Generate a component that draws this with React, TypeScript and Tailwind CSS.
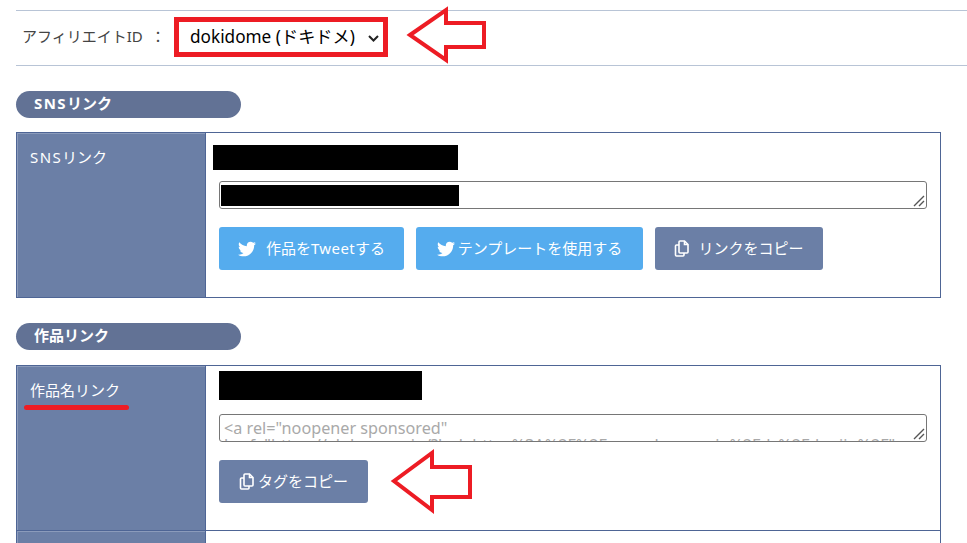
import type { ReactNode } from 'react';
import { FaTwitter } from 'react-icons/fa';

const Arrow = ({ points }: { points: string }) => (
  <svg className="absolute top-0 left-0" width="967" height="543" fill="none">
    <polygon points={points} stroke="#ed1c24" strokeWidth="4" />
  </svg>
);

const CopyIcon = ({ className }: { className: string }) => (
  <svg className={className} width="15" height="17" viewBox="0 0 15 17" fill="none" stroke="white" strokeWidth="1.6">
    <path d="M5 5H2.5a1 1 0 0 0-1 1V15a1 1 0 0 0 1 1H9a1 1 0 0 0 1-1V13" />
    <path d="M6 1H10.5L14 4.5V12a1 1 0 0 1-1 1H6a1 1 0 0 1-1-1V2a1 1 0 0 1 1-1Z" />
    <path d="M10.5 1V4.5H14" />
  </svg>
);

const SectionTitle = ({ children }: { children: ReactNode }) => (
  <div className="w-[225px] h-[27px] rounded-full bg-[#627295] pl-[18px] text-white text-[15px] font-bold leading-[25px]">
    {children}
  </div>
);

const RowLabel = ({ children }: { children: ReactNode }) => (
  <div className="w-[189px] shrink-0 bg-[#6b7fa6] border-r border-[#4e6595] shadow-[inset_1px_1px_0_#8b9bbb] pl-[13px] pt-[14px] text-white text-[15px] leading-5">
    {children}
  </div>
);

const ActionButton = ({ children, className }: { children: ReactNode; className: string }) => (
  <button className={`${className} h-[43px] rounded-[3px] flex items-center justify-center text-white text-[15px]`}>
    {children}
  </button>
);

const ResizeHandle = () => (
  <svg className="absolute right-[1px] bottom-[1px]" width="12" height="12" stroke="#555" strokeWidth="1.4">
    <path d="M1 11 L11 1 M6 11 L11 6" />
  </svg>
);

export default function App() {
  return (
    <div
      className="relative w-[967px] h-[543px] overflow-hidden bg-white pl-4 pt-[10px]"
      style={{ fontFamily: '"Noto Sans", "Noto Sans CJK JP", sans-serif' }}
    >
      {/* Affiliate ID */}
      <div className="h-[56px] border-y border-[#b8c4d6] flex items-center pl-[6px] -mr-4">
        <span className="w-[152px] -mt-1 text-[15px] text-[#444] whitespace-pre">アフィリエイトID  ：</span>
        <div className="relative -mt-[2px]">
          <select className="block appearance-none w-[214px] h-10 border-[5px] border-[#ed1c24] pl-[11px] text-[17.2px] text-black bg-white">
            <option>dokidome (ドキドメ)</option>
          </select>
          <svg className="absolute left-[194px] top-[18px]" width="11" height="7" fill="none" stroke="#222" strokeWidth="2">
            <path d="M1 1 L5.5 5.5 L10 1" />
          </svg>
        </div>
      </div>

      <div className="mt-[25px]">
        <SectionTitle>
          <span className="tracking-[1.4px]">SNS</span>リンク
        </SectionTitle>
      </div>

      {/* SNS table */}
      <div className="mt-[14px] w-[925px] h-[166px] border border-[#4e6595] flex">
        <RowLabel>
          <span className="tracking-[1.4px]">SNS</span>リンク
        </RowLabel>
        <div className="flex-1 pl-[13px]">
          <div className="-ml-[6px] mt-3 w-[245px] h-[25px] bg-black" />
          <div className="relative mt-[11px] w-[708px] h-[28px] border border-[#767676] rounded-[3px] pl-[1px] pt-[3px]">
            <div className="w-[238px] h-[21px] bg-black" />
            <ResizeHandle />
          </div>
          <div className="mt-[18px] flex">
            <ActionButton className="bg-[#55acee] w-[185px]">
              <FaTwitter className="text-[18px] mr-[10px]" />
              作品を<span className="tracking-[0.4px]">Tweet</span>する
            </ActionButton>
            <ActionButton className="bg-[#55acee] ml-3 w-[227px]">
              <FaTwitter className="text-[18px] mr-[3px]" />
              テンプレートを使用する
            </ActionButton>
            <ActionButton className="bg-[#6b7fa6] ml-3 w-[168px]">
              <CopyIcon className="mr-[9px]" />
              リンクをコピー
            </ActionButton>
          </div>
        </div>
      </div>

      <div className="mt-[25px]">
        <SectionTitle>作品リンク</SectionTitle>
      </div>

      {/* Work link table */}
      <div className="mt-[15px] w-[925px] h-[200px] border border-[#4e6595] flex flex-col">
        <div className="h-[165px] shrink-0 flex border-b border-[#4e6595]">
          <RowLabel>作品名リンク</RowLabel>
          <div className="flex-1 pl-[13px]">
            <div className="mt-[5px] w-[203px] h-[29px] bg-black" />
            <div className="relative mt-[14px] w-[708px] h-[28px] border border-[#767676] rounded-[3px] overflow-hidden pl-[4px] pt-[5px] text-[16.2px] leading-[17px] text-[#a9a9a9] whitespace-nowrap">
              {'<a rel="noopener sponsored"'}
              <br />
              {'href="https://al.dmm.co.jp/?lurl=https%3A%2F%2Fwww.dmm.co.jp%2Fdc%2Fdoujin%2F"'}
              <ResizeHandle />
            </div>
            <div className="mt-[18px]">
              <ActionButton className="bg-[#6b7fa6] w-[149px]">
                <CopyIcon className="mr-[4px]" />
                タグをコピー
              </ActionButton>
            </div>
          </div>
        </div>
        <div className="flex-1 flex">
          <div className="w-[189px] shrink-0 bg-[#6b7fa6] border-r border-[#4e6595] shadow-[inset_1px_1px_0_#8b9bbb]" />
        </div>
      </div>

      {/* annotations */}
      <Arrow points="410,35 446,10 446,23 484,23 484,47 446,47 446,60" />
      <Arrow points="394,481 432,453 432,467 470,467 470,497 432,497 432,510" />
      <div className="absolute left-6 top-[405px] w-[105px] h-[5px] rounded-full bg-[#ed1c24]" />
    </div>
  );
}
